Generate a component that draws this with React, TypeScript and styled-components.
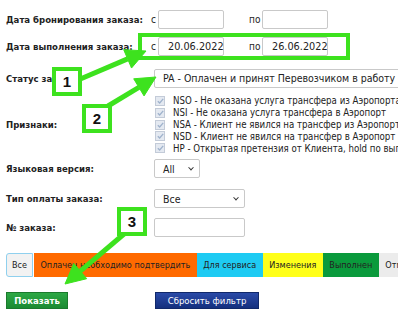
import { ReactElement } from "react";
import styled, { createGlobalStyle } from "styled-components";

const GlobalStyle = createGlobalStyle`
  html, body {
    margin: 0;
    padding: 0;
    background: #fff;
  }
  body {
    font-family: "DejaVu Sans Condensed", "DejaVu Sans", sans-serif;
    font-size: 9px;
    color: #222;
  }
`;

const GREEN = "#3de21e";

const Page = styled.div`
  position: relative;
  width: 398px;
  height: 314px;
  overflow: hidden;
  padding: 6px 0 0 6px;
  box-sizing: border-box;
`;

const Form = styled.div`
  display: grid;
  grid-template-columns: 136px 1fr;
`;

const Label = styled.div<{ $h: number }>`
  height: ${(p) => p.$h}px;
  display: flex;
  align-items: center;
  font-weight: bold;
  font-size: 9.5px;
  white-space: nowrap;
`;

const Value = styled.div<{ $h: number; $pad?: number }>`
  height: ${(p) => p.$h}px;
  display: flex;
  align-items: center;
  padding-left: ${(p) => p.$pad ?? 12}px;
  white-space: nowrap;
`;

const DateRange = styled.div<{ $highlight?: boolean }>`
  display: flex;
  align-items: center;
  height: 19px;
  padding: 0 5px 0 9px;
  border: 4px solid ${(p) => (p.$highlight ? GREEN : "transparent")};
  width: 190px;
  box-sizing: content-box;
  margin-left: -4px;
`;

const Sep = styled.span<{ $gap: number }>`
  margin-left: ${(p) => p.$gap}px;
  margin-right: 2px;
  font-size: 10px;
  width: ${(p) => (p.$gap ? 11 : 5)}px;
`;

const TextInput = styled.div<{ $w: number }>`
  width: ${(p) => p.$w}px;
  height: 19px;
  box-sizing: border-box;
  border: 1px solid #c9c9c9;
  border-radius: 2px;
  background: #fff;
  padding-left: 9px;
  font-size: 10.8px;
  display: flex;
  align-items: center;
`;

const SelectBox = styled.div<{ $w: number }>`
  width: ${(p) => p.$w}px;
  height: 19px;
  box-sizing: border-box;
  border: 1px solid #c9c9c9;
  border-radius: 2px;
  background: #fff;
  padding: 0 6px 0 8px;
  font-size: 10.5px;
  display: flex;
  align-items: center;
  justify-content: space-between;
  flex-shrink: 0;
`;

const Chevron = styled.span`
  width: 3px;
  height: 3px;
  border-right: 1.2px solid #333;
  border-bottom: 1.2px solid #333;
  transform: rotate(45deg) translate(-1px, -1px);
`;

const FlagList = styled.div`
  display: flex;
  flex-direction: column;
  padding-left: 1px;
`;

const Flag = styled.div`
  display: flex;
  align-items: center;
  height: 11.8px;
  font-size: 9.6px;
  white-space: nowrap;
`;

const Check = styled.span`
  width: 8px;
  height: 8px;
  border: 1px solid #c3cbd8;
  background: #e4e9f1;
  margin-right: 8px;
  display: flex;
  align-items: center;
  justify-content: center;
  flex-shrink: 0;
`;

const Tabs = styled.div`
  display: flex;
  margin-top: 12px;
  height: 24px;
`;

const Tab = styled.div<{ $bg: string; $first?: boolean }>`
  display: flex;
  align-items: center;
  padding: 0 6.5px;
  background: ${(p) => p.$bg};
  font-size: 9px;
  color: #222;
  white-space: nowrap;
  box-sizing: border-box;
  ${(p) =>
    p.$first &&
    `border: 1px solid #8fd0ee; border-radius: 3px 0 0 3px; padding: 0 5px; margin-right: 1px;`}
`;

const Buttons = styled.div`
  display: flex;
  margin-top: 15px;
`;

const Button = styled.div<{ $variant: "green" | "blue" }>`
  height: 17px;
  display: flex;
  align-items: center;
  justify-content: center;
  color: #fff;
  font-size: 9.5px;
  font-weight: ${(p) => (p.$variant === "green" ? "bold" : "normal")};
  width: ${(p) => (p.$variant === "green" ? 62 : 104)}px;
  margin-left: ${(p) => (p.$variant === "green" ? 0 : 87)}px;
  background: ${(p) =>
    p.$variant === "green"
      ? "linear-gradient(#2da845, #1b8a32)"
      : "linear-gradient(#2a4aa8, #14307e)"};
  border: 1px solid ${(p) => (p.$variant === "green" ? "#1a7a2c" : "#10286a")};
  box-sizing: border-box;
`;

const NumBox = styled.div<{ $x: number; $y: number }>`
  position: absolute;
  left: ${(p) => p.$x}px;
  top: ${(p) => p.$y}px;
  width: 30px;
  height: 29px;
  box-sizing: border-box;
  border: 4px solid ${GREEN};
  background: #fff;
  display: flex;
  align-items: center;
  justify-content: center;
  font-family: "Liberation Sans", Arial, sans-serif;
  font-weight: bold;
  font-size: 15px;
  color: #111;
`;

const Overlay = styled.svg`
  position: absolute;
  left: 0;
  top: 0;
  pointer-events: none;
`;

type Pt = [number, number];

function Arrow({ from, to }: { from: Pt; to: Pt }): ReactElement {
  const dx = to[0] - from[0];
  const dy = to[1] - from[1];
  const len = Math.hypot(dx, dy);
  const ux = dx / len;
  const uy = dy / len;
  const headLen = 20;
  const headW = 10;
  const bx = to[0] - ux * headLen;
  const by = to[1] - uy * headLen;
  const p1 = `${bx - uy * headW},${by + ux * headW}`;
  const p2 = `${bx + uy * headW},${by - ux * headW}`;
  return (
    <g fill={GREEN} stroke={GREEN}>
      <line x1={from[0]} y1={from[1]} x2={bx} y2={by} strokeWidth={5} />
      <polygon points={`${to[0]},${to[1]} ${p1} ${p2}`} strokeWidth={1} />
    </g>
  );
}

const flags = [
  "NSO - Не оказана услуга трансфера из Аэропорта",
  "NSI - Не оказана услуга трансфера в Аэропорт",
  "NSA - Клиент не явился на трансфер из Аэропорта",
  "NSD - Клиент не явился на трансфер в Аэропорт",
  "HP - Открытая претензия от Клиента, hold по выплате",
];

function CheckMark(): ReactElement {
  return (
    <svg width="7" height="6" viewBox="0 0 7 6">
      <path d="M0.8 3.2 L2.7 5 L6.2 0.8" fill="none" stroke="#9fb2cc" strokeWidth="1.3" />
    </svg>
  );
}

function DateRow({ from, to, highlight }: { from: string; to: string; highlight?: boolean }): ReactElement {
  return (
    <DateRange $highlight={highlight}>
      <Sep $gap={0}>с</Sep>
      <TextInput $w={66}>{from}</TextInput>
      <Sep $gap={25}>по</Sep>
      <TextInput $w={66}>{to}</TextInput>
    </DateRange>
  );
}

export default function App(): ReactElement {
  return (
    <Page>
      <GlobalStyle />
      <Form>
        <Label $h={27}>Дата бронирования заказа:</Label>
        <Value $h={27} $pad={0}>
          <DateRow from="" to="" />
        </Value>

        <Label $h={27}>Дата выполнения заказа:</Label>
        <Value $h={27} $pad={0}>
          <DateRow from="20.06.2022" to="26.06.2022" highlight />
        </Value>

        <Label $h={36}>Статус заказа:</Label>
        <Value $h={36}>
          <SelectBox $w={260}>PA - Оплачен и принят Перевозчиком в работу</SelectBox>
        </Value>

        <Label $h={57}>Признаки:</Label>
        <Value $h={57}>
          <FlagList>
            {flags.map((f) => (
              <Flag key={f}>
                <Check>
                  <CheckMark />
                </Check>
                {f}
              </Flag>
            ))}
          </FlagList>
        </Value>

        <Label $h={31}>Языковая версия:</Label>
        <Value $h={31}>
          <SelectBox $w={46}>
            All
            <Chevron />
          </SelectBox>
        </Value>

        <Label $h={29}>Тип оплаты заказа:</Label>
        <Value $h={29}>
          <SelectBox $w={91}>
            Все
            <Chevron />
          </SelectBox>
        </Value>

        <Label $h={28}>№ заказа:</Label>
        <Value $h={28}>
          <TextInput $w={91} />
        </Value>
      </Form>

      <Tabs>
        <Tab $bg="#f2f2f2" $first>
          Все
        </Tab>
        <Tab $bg="#ff6a00">Оплачен необходимо подтвердить</Tab>
        <Tab $bg="#1ecbf3">Для сервиса</Tab>
        <Tab $bg="#ffff1a">Изменения</Tab>
        <Tab $bg="#0a9a3c">Выполнен</Tab>
        <Tab $bg="#ececec">Отменён</Tab>
      </Tabs>

      <Buttons>
        <Button $variant="green">Показать</Button>
        <Button $variant="blue">Сбросить фильтр</Button>
      </Buttons>

      <Overlay width="398" height="314" viewBox="0 0 398 314">
        <Arrow from={[78, 80]} to={[146, 51]} />
        <Arrow from={[108, 106]} to={[156, 77]} />
        <Arrow from={[124, 234]} to={[65, 284]} />
      </Overlay>
      <NumBox $x={52} $y={67}>1</NumBox>
      <NumBox $x={82} $y={104}>2</NumBox>
      <NumBox $x={117} $y={207}>3</NumBox>
    </Page>
  );
}
